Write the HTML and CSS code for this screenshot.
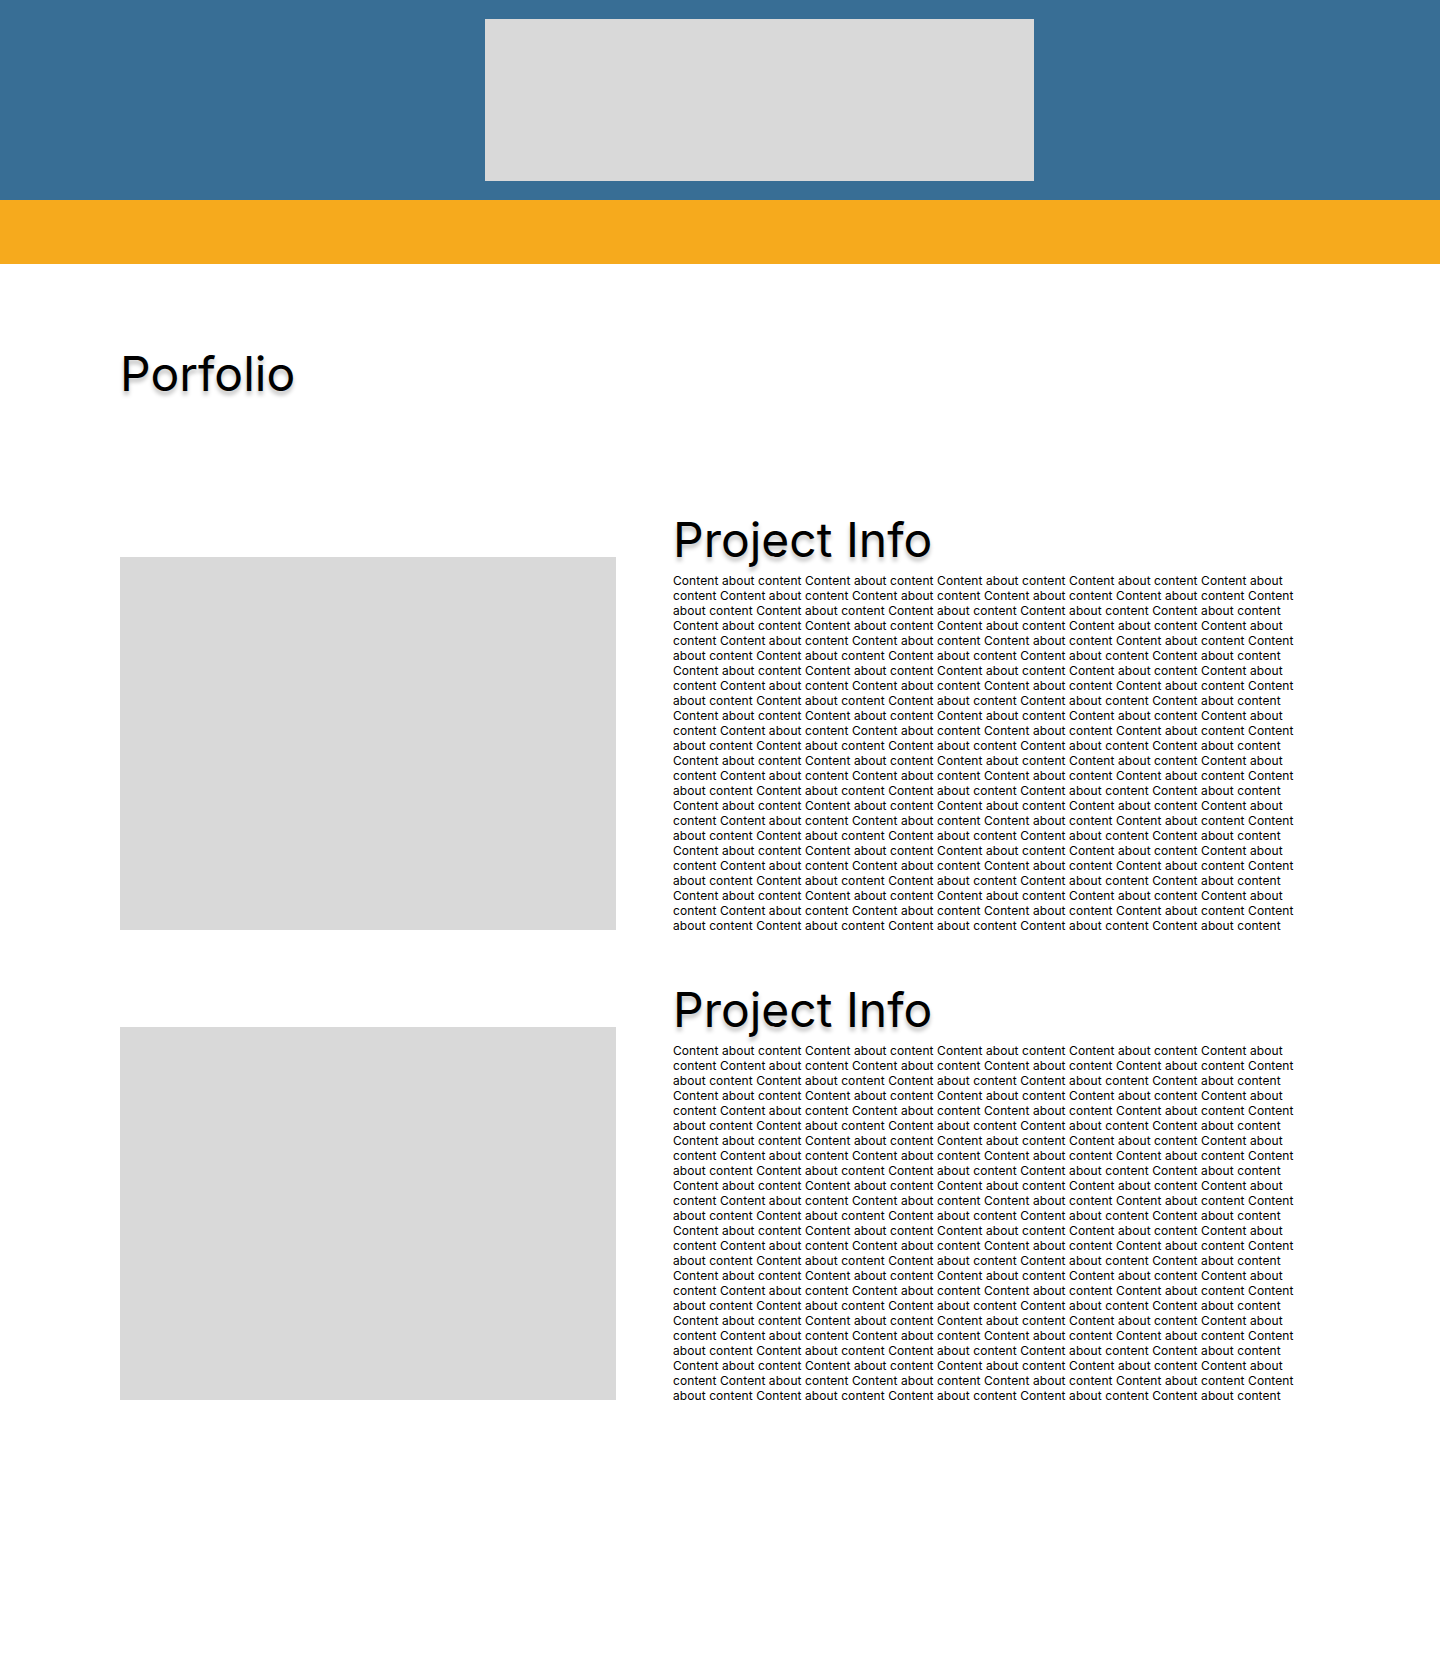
FILE: index.html
```html
<!DOCTYPE html>
<html lang="en">
<head>
<meta charset="utf-8">
<title>Porfolio</title>
<link rel="stylesheet" href="styles.css">
</head>
<body>
<header class="site-header">
  <div class="logo-box"></div>
</header>
<div class="accent-bar"></div>
<main class="content">
  <h1 class="page-title">Porfolio</h1>
  <section class="projects">
    <article class="project">
      <div class="project-image"></div>
      <div class="project-info">
        <h2 class="project-title">Project Info</h2>
        <p class="project-text">Content about content Content about content Content about content Content about content Content about content Content about content Content about content Content about content Content about content Content about content Content about content Content about content Content about content Content about content
Content about content Content about content Content about content Content about content Content about content Content about content Content about content Content about content Content about content Content about content Content about content Content about content Content about content Content about content
Content about content Content about content Content about content Content about content Content about content Content about content Content about content Content about content Content about content Content about content Content about content Content about content Content about content Content about content
Content about content Content about content Content about content Content about content Content about content Content about content Content about content Content about content Content about content Content about content Content about content Content about content Content about content Content about content
Content about content Content about content Content about content Content about content Content about content Content about content Content about content Content about content Content about content Content about content Content about content Content about content Content about content Content about content
Content about content Content about content Content about content Content about content Content about content Content about content Content about content Content about content Content about content Content about content Content about content Content about content Content about content Content about content
Content about content Content about content Content about content Content about content Content about content Content about content Content about content Content about content Content about content Content about content Content about content Content about content Content about content Content about content
Content about content Content about content Content about content Content about content Content about content Content about content Content about content Content about content Content about content Content about content Content about content Content about content Content about content Content about content</p>
      </div>
    </article>
    <article class="project">
      <div class="project-image"></div>
      <div class="project-info">
        <h2 class="project-title">Project Info</h2>
        <p class="project-text">Content about content Content about content Content about content Content about content Content about content Content about content Content about content Content about content Content about content Content about content Content about content Content about content Content about content Content about content
Content about content Content about content Content about content Content about content Content about content Content about content Content about content Content about content Content about content Content about content Content about content Content about content Content about content Content about content
Content about content Content about content Content about content Content about content Content about content Content about content Content about content Content about content Content about content Content about content Content about content Content about content Content about content Content about content
Content about content Content about content Content about content Content about content Content about content Content about content Content about content Content about content Content about content Content about content Content about content Content about content Content about content Content about content
Content about content Content about content Content about content Content about content Content about content Content about content Content about content Content about content Content about content Content about content Content about content Content about content Content about content Content about content
Content about content Content about content Content about content Content about content Content about content Content about content Content about content Content about content Content about content Content about content Content about content Content about content Content about content Content about content
Content about content Content about content Content about content Content about content Content about content Content about content Content about content Content about content Content about content Content about content Content about content Content about content Content about content Content about content
Content about content Content about content Content about content Content about content Content about content Content about content Content about content Content about content Content about content Content about content Content about content Content about content Content about content Content about content</p>
      </div>
    </article>
  </section>
</main>
</body>
</html>
```

FILE: styles.css
```css
* {
  box-sizing: border-box;
}

body {
  margin: 0;
  background: #ffffff;
  font-family: Inter, "Liberation Sans", sans-serif;
  color: #000000;
}

.site-header {
  height: 200px;
  background: #386e95;
  padding-top: 19px;
  padding-left: 485px;
}

.logo-box {
  width: 549px;
  height: 162px;
  background: #d9d9d9;
}

.accent-bar {
  height: 64px;
  background: #f6aa1d;
}

.content {
  padding: 80px 0 0 120px;
}

.page-title {
  margin: 0;
  font-size: 48px;
  font-weight: 400;
  line-height: normal;
  text-shadow: 0 4px 4px rgba(0, 0, 0, 0.25);
}

.projects {
  display: flex;
  flex-direction: column;
  gap: 47px;
  margin-top: 107px;
}

.project {
  display: flex;
  align-items: flex-end;
  gap: 57px;
}

.project-image {
  flex: 0 0 496px;
  height: 373px;
  margin-bottom: 3px;
  background: #d9d9d9;
}

.project-info {
  width: 636px;
}

.project-title {
  margin: 0;
  font-size: 48px;
  font-weight: 400;
  line-height: normal;
  text-shadow: 0 4px 4px rgba(0, 0, 0, 0.25);
}

.project-text {
  margin: 4px 0 0;
  font-size: 12px;
  line-height: 15px;
  letter-spacing: 0.08px;
}
```
